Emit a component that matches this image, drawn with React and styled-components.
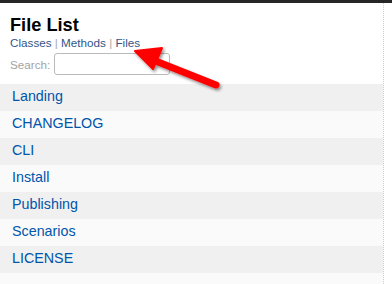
import React from "react";
import styled, { createGlobalStyle } from "styled-components";

const files = [
  "Landing",
  "CHANGELOG",
  "CLI",
  "Install",
  "Publishing",
  "Scenarios",
  "LICENSE",
];

const GlobalStyle = createGlobalStyle`
  html, body {
    margin: 0;
    padding: 0;
    background: #fff;
  }
  body {
    font-family: "Liberation Sans", Arial, sans-serif;
    font-size: 13px;
  }
`;

const Page = styled.div`
  position: relative;
  width: 392px;
  height: 284px;
  overflow: hidden;
  background: #fff;
`;

const TopBar = styled.div`
  height: 3px;
  background: #262626;
`;

const Panel = styled.div`
  width: 383px;
  height: 281px;
  background: #fafafa;
  border-right: 1px dotted #cfcfcf;
`;

const Header = styled.div`
  background: #fff;
  padding: 12px 0 9px;
`;

const Title = styled.h1`
  margin: 0;
  padding: 0 10px;
  font-size: 18.2px;
  line-height: 21px;
  font-weight: bold;
  color: #000;
`;

const Nav = styled.div`
  margin: 0 0 0 10px;
  font-size: 11.7px;
  line-height: 14px;
  color: #aaa;
`;

const NavLink = styled.a`
  color: #358;
  text-decoration: none;
`;

const Sep = styled.span`
  color: #aaa;
`;

const SearchRow = styled.div`
  display: flex;
  align-items: center;
  gap: 4px;
  margin: 3px 0 0 10px;
  font-size: 11.7px;
  color: #a4a4a4;
`;

const SearchInput = styled.input`
  box-sizing: border-box;
  width: 116px;
  height: 22px;
  border: 1px solid #bbb;
  border-radius: 3px;
  background: #fff;
  padding: 0 4px;
`;

const List = styled.ul`
  margin: 0;
  padding: 0;
  list-style: none;
  font-size: 14.3px;
`;

const Item = styled.li`
  padding: 4px 5px 7px 12px;
  line-height: 16px;
  background: ${(p) => (p.$odd ? "#f0f0f0" : "#fafafa")};
`;

const FileLink = styled.a`
  color: #05a;
  text-decoration: none;
`;

const Arrow = styled.svg`
  position: absolute;
  left: 0;
  top: 0;
  pointer-events: none;
`;

const PointerArrow = () => (
  <Arrow width="392" height="284" viewBox="0 0 392 284">
    <defs>
      <filter id="shadow" x="-20%" y="-20%" width="140%" height="140%">
        <feDropShadow dx="1.5" dy="2" stdDeviation="1.5" floodColor="#000" floodOpacity="0.45" />
      </filter>
    </defs>
    <g filter="url(#shadow)">
      <line x1="216" y1="85" x2="153" y2="60" stroke="#f00" strokeWidth="7" strokeLinecap="round" />
      <polygon points="135,51 162,48 153,69" fill="#f00" stroke="#f00" strokeWidth="2" strokeLinejoin="round" />
    </g>
  </Arrow>
);

const App = () => {
  return (
    <Page>
      <GlobalStyle />
      <TopBar />
      <Panel>
        <Header>
          <Title>File List</Title>
          <Nav>
            <NavLink href="#">Classes</NavLink>
            <Sep> | </Sep>
            <NavLink href="#">Methods</NavLink>
            <Sep> | </Sep>
            <NavLink href="#">Files</NavLink>
          </Nav>
          <SearchRow>
            <label htmlFor="search">Search:</label>
            <SearchInput id="search" type="text" />
          </SearchRow>
        </Header>
        <List>
          {files.map((name, i) => (
            <Item key={name} $odd={i % 2 === 0}>
              <FileLink href="#">{name}</FileLink>
            </Item>
          ))}
        </List>
      </Panel>
      <PointerArrow />
    </Page>
  );
};

export default App;
